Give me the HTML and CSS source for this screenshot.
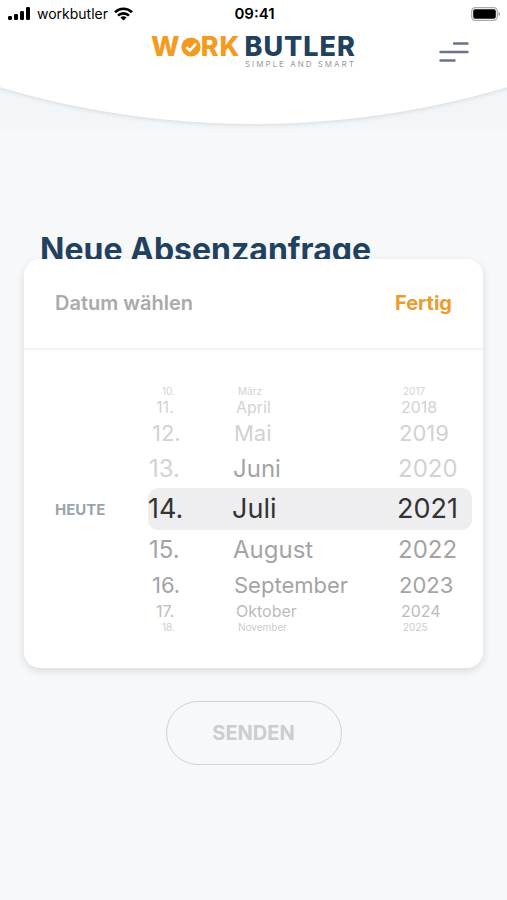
FILE: index.html
```html
<!DOCTYPE html>
<html lang="de">
  <head>
    <meta charset="UTF-8" />
    <meta name="viewport" content="width=device-width, initial-scale=1.0" />
    <title>Neue Absenzanfrage</title>
    <link rel="stylesheet" href="styles.css">
  </head>
  <body>
    <header class="top">
      <div class="status">
        <div class="carrier">
          <svg width="23" height="14" viewBox="0 0 23 14" aria-hidden="true">
            <rect x="0" y="9" width="4" height="4" rx="1.2" />
            <rect x="6" y="7" width="4" height="6" rx="1.2" />
            <rect x="12" y="4" width="4" height="9" rx="1.2" />
            <rect x="18" y="0" width="4" height="13" rx="1.2" />
          </svg>
          <span>workbutler</span>
          <svg width="19" height="14" viewBox="0 0 19 14" aria-hidden="true">
            <g fill="none" stroke="#000" stroke-width="2.6">
              <path d="M1 5.2a12.2 12.2 0 0 1 17 0" />
              <path d="M4 8.6a7.9 7.9 0 0 1 11 0" />
            </g>
            <path d="M9.5 13.6 6.4 10.5a4.4 4.4 0 0 1 6.2 0z" />
          </svg>
        </div>
        <span class="time">09:41</span>
        <svg class="battery" width="30" height="14" viewBox="0 0 30 14" aria-hidden="true">
          <rect x="0.7" y="0.7" width="25.6" height="12.6" rx="3.6" fill="#fff" stroke="#aaa" stroke-width="1.2" />
          <rect x="2.2" y="2.2" width="22.6" height="9.6" rx="2" />
          <path d="M27.6 4.8v4.4c2-.8 2-3.6 0-4.4z" fill="#999" />
        </svg>
      </div>
      <div class="bar">
        <div class="logo">
          <div class="logo-name">
            <span class="logo-work">W<svg width="20" height="20" viewBox="0 0 20 20" role="img" aria-label="O"><circle cx="10" cy="10" r="9.6" fill="#f39a1f" /><path d="M5.4 10.2l3.4 3.4 6.2-7" fill="none" stroke="#fff" stroke-width="2.6" /></svg>RK</span><span class="logo-butler">BUTLER</span>
          </div>
          <div class="logo-claim">SIMPLE AND SMART</div>
        </div>
        <button class="menu" aria-label="Menü">
          <svg width="30" height="22" viewBox="0 0 30 22" fill="none" stroke="#66748d" stroke-width="2.4" stroke-linecap="round">
            <path d="M15 2.5h13.5M1.5 11h27M1.5 19.5h14" />
          </svg>
        </button>
      </div>
    </header>

    <main>
      <h1>Neue Absenzanfrage</h1>

      <section class="card">
        <div class="card-head">
          <h2>Datum wählen</h2>
          <button class="done">Fertig</button>
        </div>
        <div class="card-body">
          <button class="today">HEUTE</button>
          <div class="picker">
            <ul class="wheel day" role="listbox" aria-label="Tag">
              <li class="far above" role="option">10.</li>
              <li class="low above" role="option">11.</li>
              <li class="mid above" role="option">12.</li>
              <li class="near above" role="option">13.</li>
              <li class="selected" role="option" aria-selected="true">14.</li>
              <li class="near" role="option">15.</li>
              <li class="mid" role="option">16.</li>
              <li class="low" role="option">17.</li>
              <li class="far" role="option">18.</li>
            </ul>
            <ul class="wheel month" role="listbox" aria-label="Monat">
              <li class="far above" role="option">März</li>
              <li class="low above" role="option">April</li>
              <li class="mid above" role="option">Mai</li>
              <li class="near" role="option">Juni</li>
              <li class="selected" role="option" aria-selected="true">Juli</li>
              <li class="near" role="option">August</li>
              <li class="mid" role="option">September</li>
              <li class="low" role="option">Oktober</li>
              <li class="far" role="option">November</li>
            </ul>
            <ul class="wheel year" role="listbox" aria-label="Jahr">
              <li class="far above" role="option">2017</li>
              <li class="low above" role="option">2018</li>
              <li class="mid above" role="option">2019</li>
              <li class="near above" role="option">2020</li>
              <li class="selected" role="option" aria-selected="true">2021</li>
              <li class="near" role="option">2022</li>
              <li class="mid" role="option">2023</li>
              <li class="low" role="option">2024</li>
              <li class="far" role="option">2025</li>
            </ul>
          </div>
        </div>
      </section>

      <button class="send" disabled>SENDEN</button>
    </main>
  </body>
</html>
```
FILE: styles.css
```css
* {
  box-sizing: border-box;
  margin: 0;
  padding: 0;
}

body {
  font-family: Inter, "Liberation Sans", sans-serif;
  background: linear-gradient(#f2f6f8 120px, #f6f8fa 134px);
  min-height: 100vh;
}

button {
  font-family: inherit;
  background: none;
  border: none;
  cursor: pointer;
}

svg {
  display: block;
}

/* Header */
.top {
  position: relative;
  z-index: 0;
  height: 124px;
  overflow-x: clip;
}

/* big circle that gives the header its curved lower edge */
.top::before {
  content: "";
  position: absolute;
  z-index: -1;
  bottom: 0;
  left: -125%;
  width: 350%;
  aspect-ratio: 1;
  border-radius: 50%;
  background: #fff;
  box-shadow: 0 1px 5px rgba(0, 0, 0, 0.12);
}

.status {
  display: grid;
  grid-template-columns: 1fr auto 1fr;
  align-items: center;
  height: 27px;
  padding: 0 6px 0 8px;
  font-size: 14px;
}

.carrier {
  display: flex;
  align-items: center;
  gap: 6px;
}

.time {
  font-weight: 600;
  font-size: 15px;
}

.battery {
  justify-self: end;
}

.bar {
  display: grid;
  grid-template-columns: 1fr auto 1fr;
  align-items: center;
  padding: 8px 38px 0;
}

.logo {
  grid-column: 2;
  text-align: right;
}

.logo-name {
  display: flex;
  gap: 4px;
  font-size: 27px;
  line-height: 24px;
  font-weight: 800;
  letter-spacing: 1px;
}

.logo-work {
  display: flex;
  align-items: center;
  color: #f39a1f;
}

.logo-butler {
  color: #21415f;
}

.logo-claim {
  font-size: 8px;
  line-height: 10px;
  letter-spacing: 2px;
  color: #999;
}

.menu {
  justify-self: end;
}

/* Page */
main {
  padding: 108px 24px 0;
}

h1 {
  padding-left: 16px;
  font-size: 32px;
  line-height: 36px;
  color: #21415f;
}

.card {
  position: relative;
  margin-top: -9px;
  background: #fff;
  border-radius: 16px;
  box-shadow: 0 3px 8px rgba(0, 0, 0, 0.12);
}

.card-head {
  display: flex;
  justify-content: space-between;
  align-items: center;
  height: 91px;
  padding: 0 31px 2px;
  border-bottom: 2px solid #f3f3f4;
}

.card-head h2 {
  font-size: 20px;
  font-weight: 600;
  color: #aaa;
}

.done {
  font-size: 20px;
  font-weight: 700;
  color: #eb9c2c;
}

.card-body {
  display: flex;
  justify-content: space-between;
  align-items: center;
  padding: 35px 11px 35px 31px;
}

.today {
  font-size: 15px;
  font-weight: 700;
  color: #98a4ae;
}

/* Date wheels */
.picker {
  display: grid;
  grid-template-columns: 84px 1fr 75px;
  width: 324px;
}

.wheel {
  list-style: none;
  color: #a4a4a4;
}

.wheel li {
  white-space: nowrap;
}

.wheel .selected {
  font-size: 27px;
  line-height: 42px;
  color: #333;
  background: #eeeef0;
}

.day .selected {
  border-radius: 10px 0 0 10px;
}

.year .selected {
  border-radius: 0 10px 10px 0;
}

.near {
  font-size: 24px;
  line-height: 39px;
  padding-left: 1px;
}

.mid {
  font-size: 22px;
  line-height: 32px;
  padding-left: 2px;
}

.low {
  font-size: 16px;
  line-height: 20px;
  padding-left: 4px;
  color: #bbb;
}

.far {
  font-size: 10px;
  line-height: 12px;
  padding-left: 6px;
  color: #ccc;
}

.above {
  color: #d2d2d2;
}

.day .mid {
  padding-left: 4px;
}

.day .low {
  padding-left: 8px;
}

.day .far {
  padding-left: 14px;
}

/* Submit */
.send {
  display: block;
  width: 176px;
  height: 64px;
  margin: 33px auto 0;
  border: 1px solid #d0d4d7;
  border-radius: 32px;
  font-size: 20px;
  font-weight: 700;
  color: #c9ced2;
}
```
